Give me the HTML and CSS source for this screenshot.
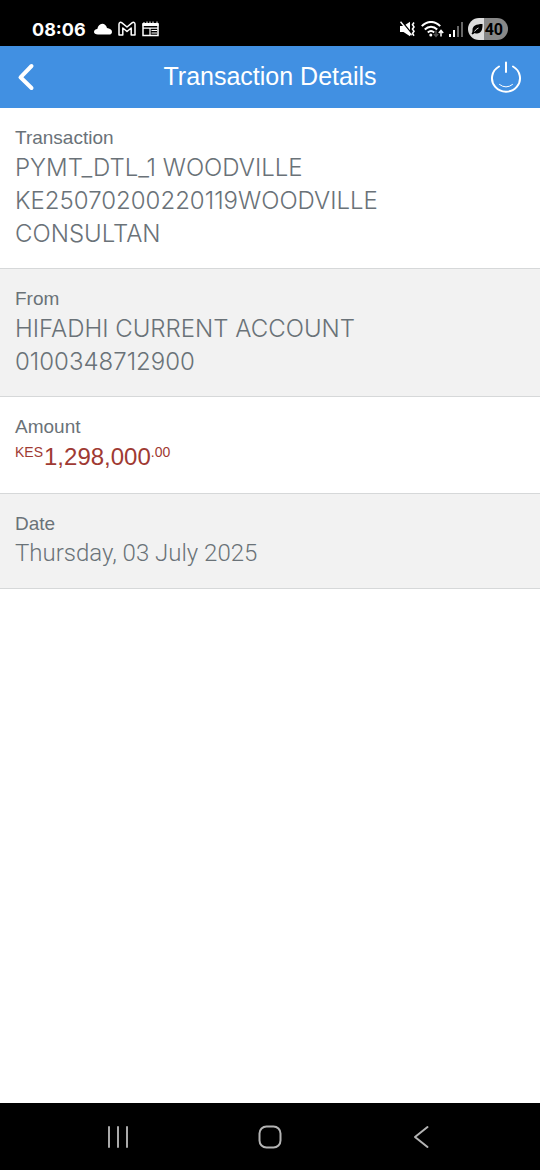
FILE: index.html
```html
<!DOCTYPE html>
<html lang="en">
<head>
<meta charset="utf-8">
<meta name="viewport" content="width=device-width, initial-scale=1">
<title>Transaction Details</title>
<link rel="stylesheet" href="styles.css">
</head>
<body>
<div class="screen">
  <div class="status">
    <div class="status-group">
      <span class="clock">08:06</span>
      <svg class="icon" width="18" height="12" viewBox="0 0 18 12" fill="#fff"><path d="M4 11.500C1.500 11.500 0 10.500 0 9 0 7.300 1.300 6.200 3.300 6 4 3 5.800.8 8.200.8c2.400 0 4.200 1.800 4.800 4.300 2.600.2 5 1.700 5 3.800 0 1.700-1.300 2.600-3.200 2.600z"/></svg>
      <svg class="icon" width="18" height="16" viewBox="0 0 18 16" fill="none" stroke="#fff" stroke-width="1.500" stroke-linejoin="round"><path d="M1 14V3.200C1 1.300 2.700.9 4 1.900L9 6l5-4.100c1.300-1 3-.6 3 1.300V14h-3.800V7L9 10.500 4.800 7v7z"/></svg>
      <svg class="icon" width="17" height="16" viewBox="0 0 17 16" fill="none" stroke="#fff"><path d="M1 2.500V14.500H16V2.500" stroke-width="1.500"/><path d="M0.500 3.500H16.500" stroke-width="3"/><path d="M2 1v1M5 .5v2M8 .5v2M11 .5v2M15 .5v2"/><path d="M1 7.200H16M8 7.500V14M9.500 9.500H15M9.500 12H15" stroke-width="1.200"/></svg>
    </div>
    <div class="status-group status-right">
      <svg class="icon" width="16" height="16" viewBox="0 0 16 16"><path d="M0 5h3.500L10 .8v14.400L3.500 11H0z" fill="#fff"/><path d="M1.500 0l11 13.500" stroke="#000" stroke-width="1.500"/><path d="M.5.8l11 13.500" stroke="#fff" stroke-width="1.500"/><path d="M14 1.500l-1.500 2.200 1.500 2.200-1.500 2.200 1.500 2.200-1.500 2.200 1.500 2.200" fill="none" stroke="#fff" stroke-width="1.600"/></svg>
      <svg class="icon" width="23" height="17" viewBox="0 0 23 17" fill="none" stroke="#fff" stroke-width="2"><path d="M.8 5.200C6-0.500 14-.5 19.200 5.200M3.800 8.500c3.600-3.800 8.800-3.800 12.400 0M6.800 11.500c2-1.900 4.400-1.900 6.400 0"/><circle cx="9.800" cy="14" r="1.500" fill="#fff" stroke="none"/><path d="M15 9.500v5.500M12.800 13l2.200 2.400L17.200 13" stroke="#555" stroke-width="1.400"/><path d="M20 15.500v-5M17.800 12L20 9.500 22.200 12" stroke-width="1.500"/></svg>
      <svg class="icon" width="14" height="15" viewBox="0 0 14 15"><path d="M0 12h2v3H0zM4 8h2v7H4z" fill="#fff"/><path d="M8 4h2v11H8zM12 0h2v15h-2z" fill="#666"/></svg>
      <span class="battery"><svg width="12" height="12" viewBox="0 0 12 12"><path d="M.5 10.500C1.500 9.500 1.500 8.500 1.500 7 1.500 3 5 1 11.500 1c.2 6-1.500 9.500-5.500 9.500-1 0-1.700-.2-2.200-.6L1.500 11.500z"/><path d="M3.500 8.500Q5 6 7.500 5" fill="none" stroke="#ddd" stroke-width="1"/></svg><span>40</span></span>
    </div>
  </div>
  <header class="header">
    <button class="head-btn" aria-label="Back"><svg width="18" height="28" viewBox="0 0 18 28" fill="none" stroke="#fff" stroke-width="4" stroke-linecap="round" stroke-linejoin="round"><path d="M14.500 3L3.500 14.300 14.500 25"/></svg></button>
    <h1 class="title">Transaction Details</h1>
    <button class="head-btn head-power" aria-label="Log out"><svg width="32" height="32" viewBox="0 0 32 32" fill="none" stroke="#fff" stroke-width="2" stroke-linecap="round"><path d="M9 5.500A14 13.500 0 1 0 23 5.500M16 1.500v9.500"/><path d="M9.500 23.500q6.500 5 13 0" stroke-width="1"/></svg></button>
  </header>
  <main class="details">
    <section class="row">
      <h2 class="label">Transaction</h2>
      <p class="value">PYMT_DTL_1 WOODVILLE<br>KE25070200220119WOODVILLE<br>CONSULTAN</p>
    </section>
    <section class="row shaded">
      <h2 class="label">From</h2>
      <p class="value">HIFADHI CURRENT ACCOUNT<br>0100348712900</p>
    </section>
    <section class="row row-amount">
      <h2 class="label">Amount</h2>
      <p class="value amount"><span class="small currency">KES</span><span>1,298,000</span><span class="small">.00</span></p>
    </section>
    <section class="row shaded">
      <h2 class="label">Date</h2>
      <p class="value date">Thursday, 03 July 2025</p>
    </section>
  </main>
  <nav class="nav">
    <button class="nav-btn" aria-label="Recent apps"><svg width="24" height="24" viewBox="0 0 24 24" stroke="#aaa" stroke-width="2" stroke-linecap="round"><path d="M3 2v20M12 2v20M21 2v20"/></svg></button>
    <button class="nav-btn" aria-label="Home"><svg width="24" height="24" viewBox="0 0 24 24" fill="none" stroke="#b4b4b4" stroke-width="2"><rect x="1.500" y="1.500" width="21" height="21" rx="7"/></svg></button>
    <button class="nav-btn" aria-label="Back"><svg width="24" height="24" viewBox="0 0 24 24" fill="none" stroke="#b4b4b4" stroke-width="2" stroke-linecap="round" stroke-linejoin="round"><path d="M17.500 2L5 12 17.500 22"/></svg></button>
  </nav>
</div>
</body>
</html>
```
FILE: styles.css
```css
* { box-sizing: border-box; }
body {
  margin: 0;
  background: #fff;
  color: #6a7278;
  font-family: "Liberation Sans", Arial, sans-serif;
}
h1, h2, p { margin: 0; font-weight: 400; }
button { border: 0; padding: 0; background: none; display: flex; align-items: center; justify-content: center; }
svg { display: block; flex: none; }
.screen { min-height: 100vh; display: flex; flex-direction: column; }

.status {
  display: flex;
  justify-content: space-between;
  background: #000;
  color: #fff;
  height: 46px;
  padding: 12px 32px 0;
}
.status-group { display: flex; align-items: center; gap: 6px; }
.status-right { gap: 5px; }
.clock { font-family: Inter, sans-serif; font-size: 18px; font-weight: 700; margin-right: 2px; }
.battery {
  display: flex;
  align-items: center;
  gap: 2px;
  height: 22px;
  padding: 0 5px 0 3px;
  border-radius: 11px;
  background: linear-gradient(90deg, #ddd 40%, #888 40%);
  color: #000;
  font-family: Roboto, sans-serif;
  font-size: 16px;
  font-weight: 700;
}

.header {
  display: grid;
  grid-template-columns: 68px 1fr 68px;
  align-items: center;
  height: 62px;
  background: #4190e2;
  color: #fff;
}
.title { font-size: 25px; line-height: 28px; padding-bottom: 2px; text-align: center; }
.head-btn { height: 62px; padding-right: 16px; }
.head-power { padding: 0; }

.details { flex: 1; }
.row { padding: 18px 15px; border-bottom: 1px solid #d6d8d9; }
.shaded { background: #f2f2f2; }
.row-amount { padding-bottom: 20px; }
.label { font-size: 19px; line-height: 24px; }
.value { padding-top: 1px; font-family: Inter, sans-serif; font-size: 24px; font-weight: 300; line-height: 33px; }
.date { font-family: Roboto, sans-serif; }
.amount { display: flex; color: #9f3a33; font-family: "Liberation Sans", Arial, sans-serif; font-weight: 400; }
.small { font-size: 14px; line-height: 24px; }
.currency { padding-right: 1px; }

.nav {
  display: flex;
  justify-content: space-around;
  align-items: center;
  height: 67px;
  padding: 0 42px;
  background: #000;
}
.nav-btn { flex: 1; height: 48px; }
```
